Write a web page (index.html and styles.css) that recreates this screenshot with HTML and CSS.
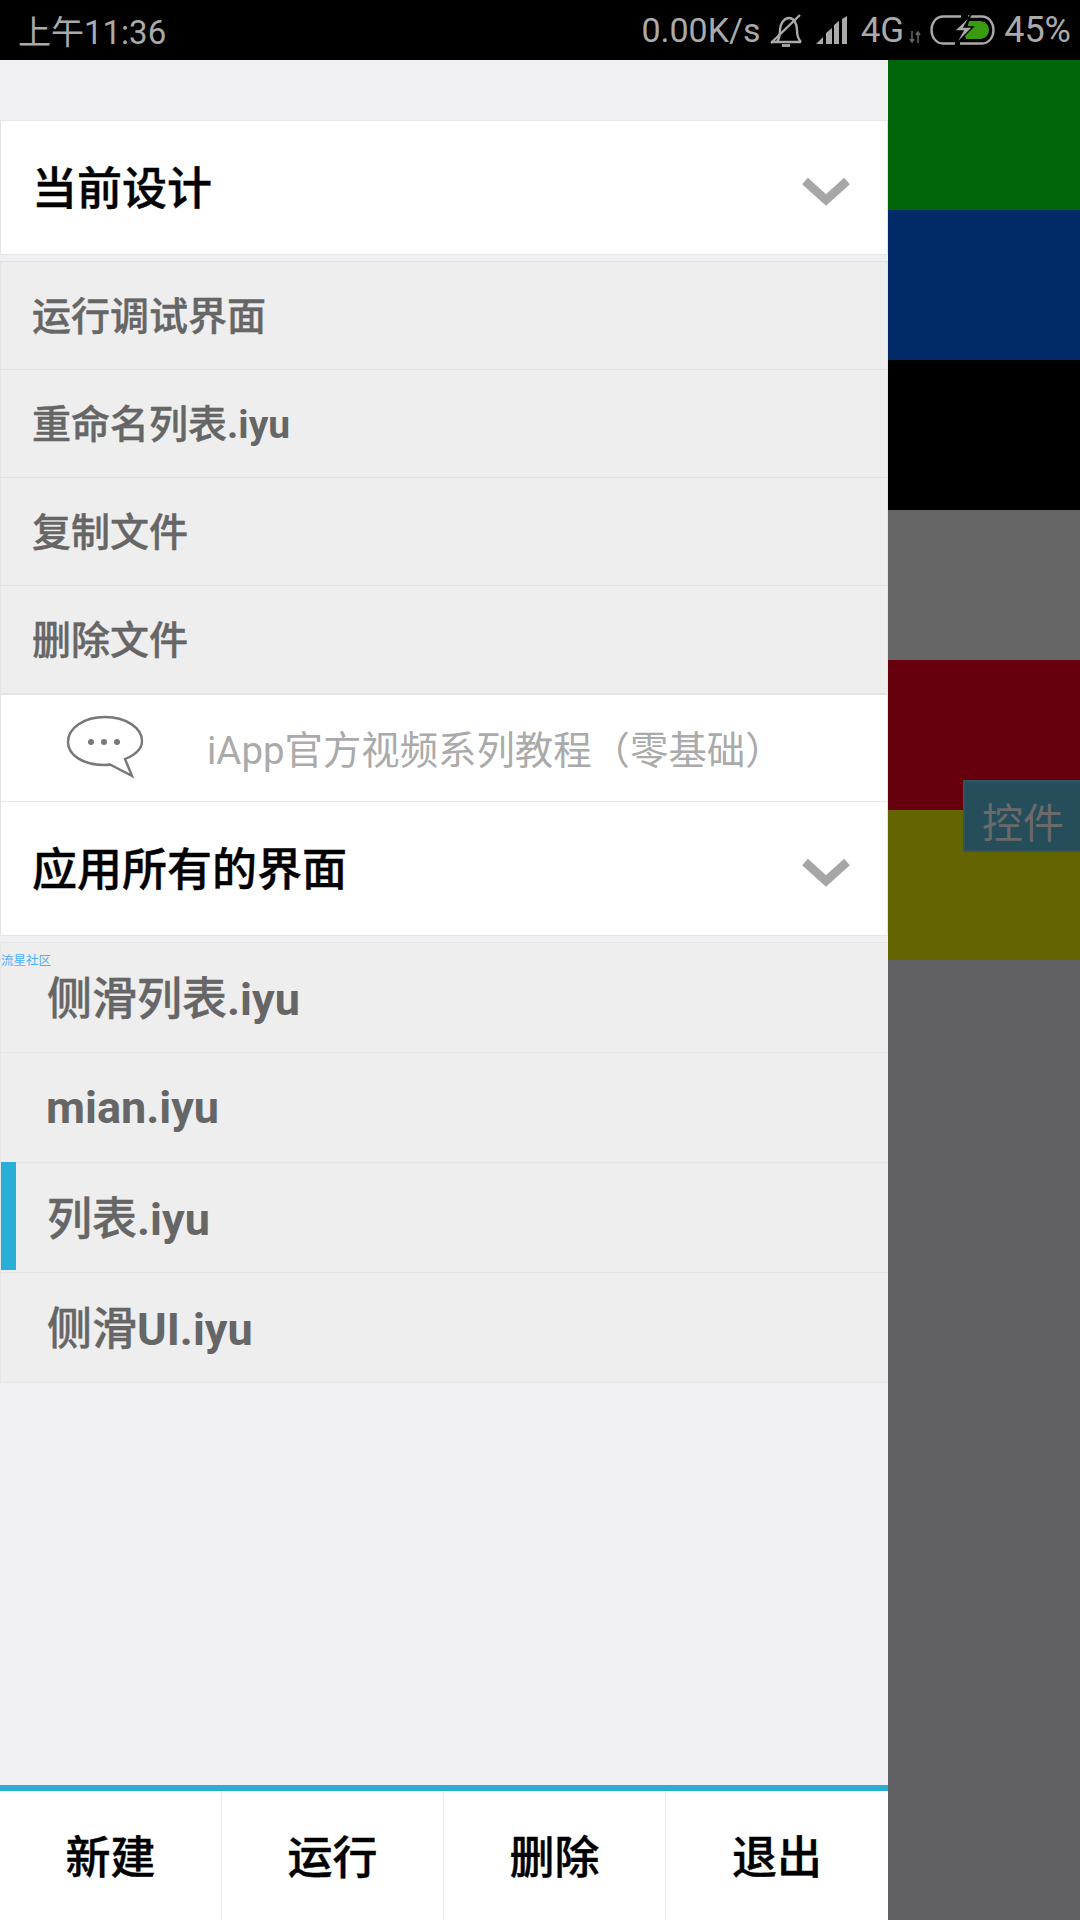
FILE: index.html
```html
<!DOCTYPE html>
<html lang="zh-CN">
<head>
  <meta charset="UTF-8" />
  <meta name="viewport" content="width=device-width, initial-scale=1.0"/>
  <title>iApp</title>
  <link rel="stylesheet" href="styles.css">
</head>
<body>
  <div class="statusbar">
    <span class="clock">上午11:36</span>
    <div class="status-right">
      <span class="speed">0.00K/s</span>
      <svg class="ic-bell" width="32" height="33" viewBox="0 0 32 33" fill="none" stroke="#aaa" stroke-width="2.400">
        <path d="M1 28h30M7 28c2-3 3-6 3-12 0-6 4-12 9-12s8 6 8 12c0 6 1 9 4 12"/>
        <path d="M12 31.500h8" stroke-width="2.800"/>
        <path d="M1 29L30 1"/>
      </svg>
      <svg class="ic-signal" width="31" height="28" viewBox="0 0 31 28" fill="#aaa">
        <path d="M0 28l7-7v7zM10 17l6-5v16h-6zM18 9l5-4v23h-5zM26 3l5-3v28h-5z"/>
      </svg>
      <span class="net">4G</span>
      <svg class="ic-updown" width="12" height="12" viewBox="0 0 12 12" stroke="#666" stroke-width="1.500" fill="none">
        <path d="M3 0v10M1 8l2 3 2-3M9 12V2M7 4l2-3 2 3"/>
      </svg>
      <svg class="ic-battery" width="65" height="30" viewBox="0 0 65 30" fill="none">
        <path d="M25 28.500H13C6 28.500 1.500 22 1.500 15S6 1.500 13 1.500h18M38 1.500h14c7 0 11.500 6.500 11.500 13.500S59 28.500 52 28.500H30" stroke="#aaa" stroke-width="2.400"/>
        <path d="M39 6h11c5 0 9 4 9 9s-4 9-9 9H36l-1-3z" fill="#3a9a10"/>
        <path d="M41 0L24 16h9l-8 14 18-18h-9z" fill="#aaa" stroke="#000" stroke-width="1.400"/>
      </svg>
      <span class="pct">45%</span>
    </div>
  </div>

  <div class="screen">
    <div class="drawer">
      <div class="section-head head-first">
        <span>当前设计</span>
        <svg class="chevron" width="48" height="30" viewBox="0 0 48 30" fill="none" stroke="#a6a6a6" stroke-width="8.500">
          <path d="M3 5l21 19L45 5"/>
        </svg>
      </div>

      <ul class="menu">
        <li>运行调试界面</li>
        <li><span>重命名列表<b>.iyu</b></span></li>
        <li>复制文件</li>
        <li>删除文件</li>
      </ul>

      <div class="notice">
        <svg class="bubble" width="78" height="64" viewBox="0 0 78 64" fill="none" stroke="#777" stroke-width="2.400">
          <path d="M39 2C18 2 2 13 2 27c0 13 15 23 36 23 2 0 4 0 6-.5L66 61l-7-17c10-4 17-10 17-18C76 13 60 2 39 2z"/>
          <circle cx="25" cy="27" r="3" fill="#777" stroke="none"/>
          <circle cx="38" cy="27" r="3" fill="#777" stroke="none"/>
          <circle cx="51" cy="27" r="3" fill="#777" stroke="none"/>
        </svg>
        <span class="notice-text">iApp官方视频系列教程（零基础）</span>
      </div>

      <div class="section-head">
        <span>应用所有的界面</span>
        <svg class="chevron" width="48" height="30" viewBox="0 0 48 30" fill="none" stroke="#a6a6a6" stroke-width="8.500">
          <path d="M3 5l21 19L45 5"/>
        </svg>
      </div>

      <ul class="files">
        <li><span class="watermark">流星社区</span><span>侧滑列表<b>.iyu</b></span></li>
        <li class="latin"><b>mian.iyu</b></li>
        <li class="active"><span>列表<b>.iyu</b></span></li>
        <li><span>侧滑<b>UI.iyu</b></span></li>
      </ul>

      <div class="toolbar">
        <div>新建</div>
        <div>运行</div>
        <div>删除</div>
        <div>退出</div>
      </div>
    </div>

    <div class="behind">
      <div class="band green"></div>
      <div class="band navy"></div>
      <div class="band black"></div>
      <div class="band grey"></div>
      <div class="band red"></div>
      <div class="band olive"></div>
      <div class="float-tag">控件</div>
    </div>
  </div>
</body>
</html>
```

FILE: styles.css
```css
* { box-sizing: border-box; }
html, body { margin: 0; padding: 0; }
body {
  width: 1080px; height: 1920px; overflow: hidden; background: #000;
  font-family: Roboto, "Noto Sans CJK SC", sans-serif;
}
ul { list-style: none; margin: 0; padding: 0; }
b { font-weight: 700; -webkit-text-stroke: 0; }

.statusbar {
  height: 60px; background: #000; color: #aaa; display: flex;
  justify-content: space-between; align-items: center; padding: 0 9px 0 18px;
  font-size: 35px;
}
.clock { font-size: 33px; }
.status-right { display: flex; align-items: center; }
.speed { margin-right: 9px; font-size: 34px; }
.pct { font-size: 36px; }
.ic-bell { margin-right: 14px; }
.ic-signal { margin-right: 14px; }
.ic-updown { margin: 14px 9px 0 5px; }
.ic-battery { margin-right: 9px; }

.screen { display: flex; height: 1860px; }
.drawer {
  width: 888px; background: #efeff4; display: flex; flex-direction: column;
}

.section-head {
  height: 135px; background: #fff; border: 1px solid #e4e4e8; border-top-color: #e8e8e8;
  display: flex; align-items: center; justify-content: space-between;
  padding: 0 37px 0 31px; font-size: 45px; font-weight: 500; color: #000;
  -webkit-text-stroke: .4px #000; flex-shrink: 0;
}
.section-head span { padding-bottom: 4px; }
.head-first { margin-top: 60px; }
.chevron { display: block; margin-top: 6px; }

.menu { margin-top: 6px; }
.menu li {
  height: 108px; background: #eee; border: 1px solid #e4e4e4; border-top: 1px solid #e2e2e2;
  border-bottom: none; padding: 0 0 5px 31px; display: flex; align-items: center;
  font-size: 39px; font-weight: 500; color: #666; -webkit-text-stroke: .4px #666;
}

.notice {
  height: 108px; background: #fff; border: 1px solid #e4e4e4; border-top-width: 2px; border-bottom: none;
  display: flex; align-items: center; padding-left: 65px;
}
.bubble { display: block; margin-top: -2px; }
.notice-text { margin-left: 63px; padding-bottom: 2px; font-size: 38.400px; color: #aaa; white-space: nowrap; }

.files { margin-top: 6px; width: 889px; position: relative; }
.files li {
  position: relative; height: 110px; background: #eee; border: 1px solid #e6e6e6;
  border-bottom: none; padding: 0 0 5px 46px; display: flex; align-items: center;
  font-size: 45px; font-weight: 500; color: #666; -webkit-text-stroke: .4px #666;
}
.files .latin { padding: 0 0 0 45px; }
.files li:last-child { height: 111px; border-bottom: 1px solid #e6e6e6; }
.files .active::before {
  content: ""; position: absolute; left: 0; top: -1px; bottom: 2px; width: 15px; background: #29afd6;
}
.watermark {
  position: absolute; left: 0; top: 10px; font-size: 12.500px; line-height: 16px;
  font-weight: 400; color: #4ab0ff; -webkit-text-stroke: 0;
}

.toolbar {
  margin-top: auto; height: 135px; background: #fff; border-top: 6px solid #29afd6;
  display: grid; grid-template-columns: repeat(4, 1fr);
}
.toolbar div {
  display: flex; align-items: center; justify-content: center; padding: 0 0 3px;
  border-right: 1px solid #ececec; font-size: 45px; font-weight: 500; color: #000;
  -webkit-text-stroke: .4px #000;
}
.toolbar div:last-child { border-right: none; }

.behind { flex: 1; background: #616163; position: relative; }
.band { height: 150px; }
.green { background: #006408; }
.navy { background: #002b66; }
.black { background: #000; }
.grey { background: #666; }
.red { background: #66000c; }
.olive { background: #646400; }
.float-tag {
  position: absolute; left: 75px; top: 720px; width: 117px; height: 72px;
  background: #264d5a; border: 2px solid #2f5663; border-right: none;
  font-size: 41px; color: #6a6a6a; line-height: 84px; padding-left: 17px; overflow: hidden;
}
```
